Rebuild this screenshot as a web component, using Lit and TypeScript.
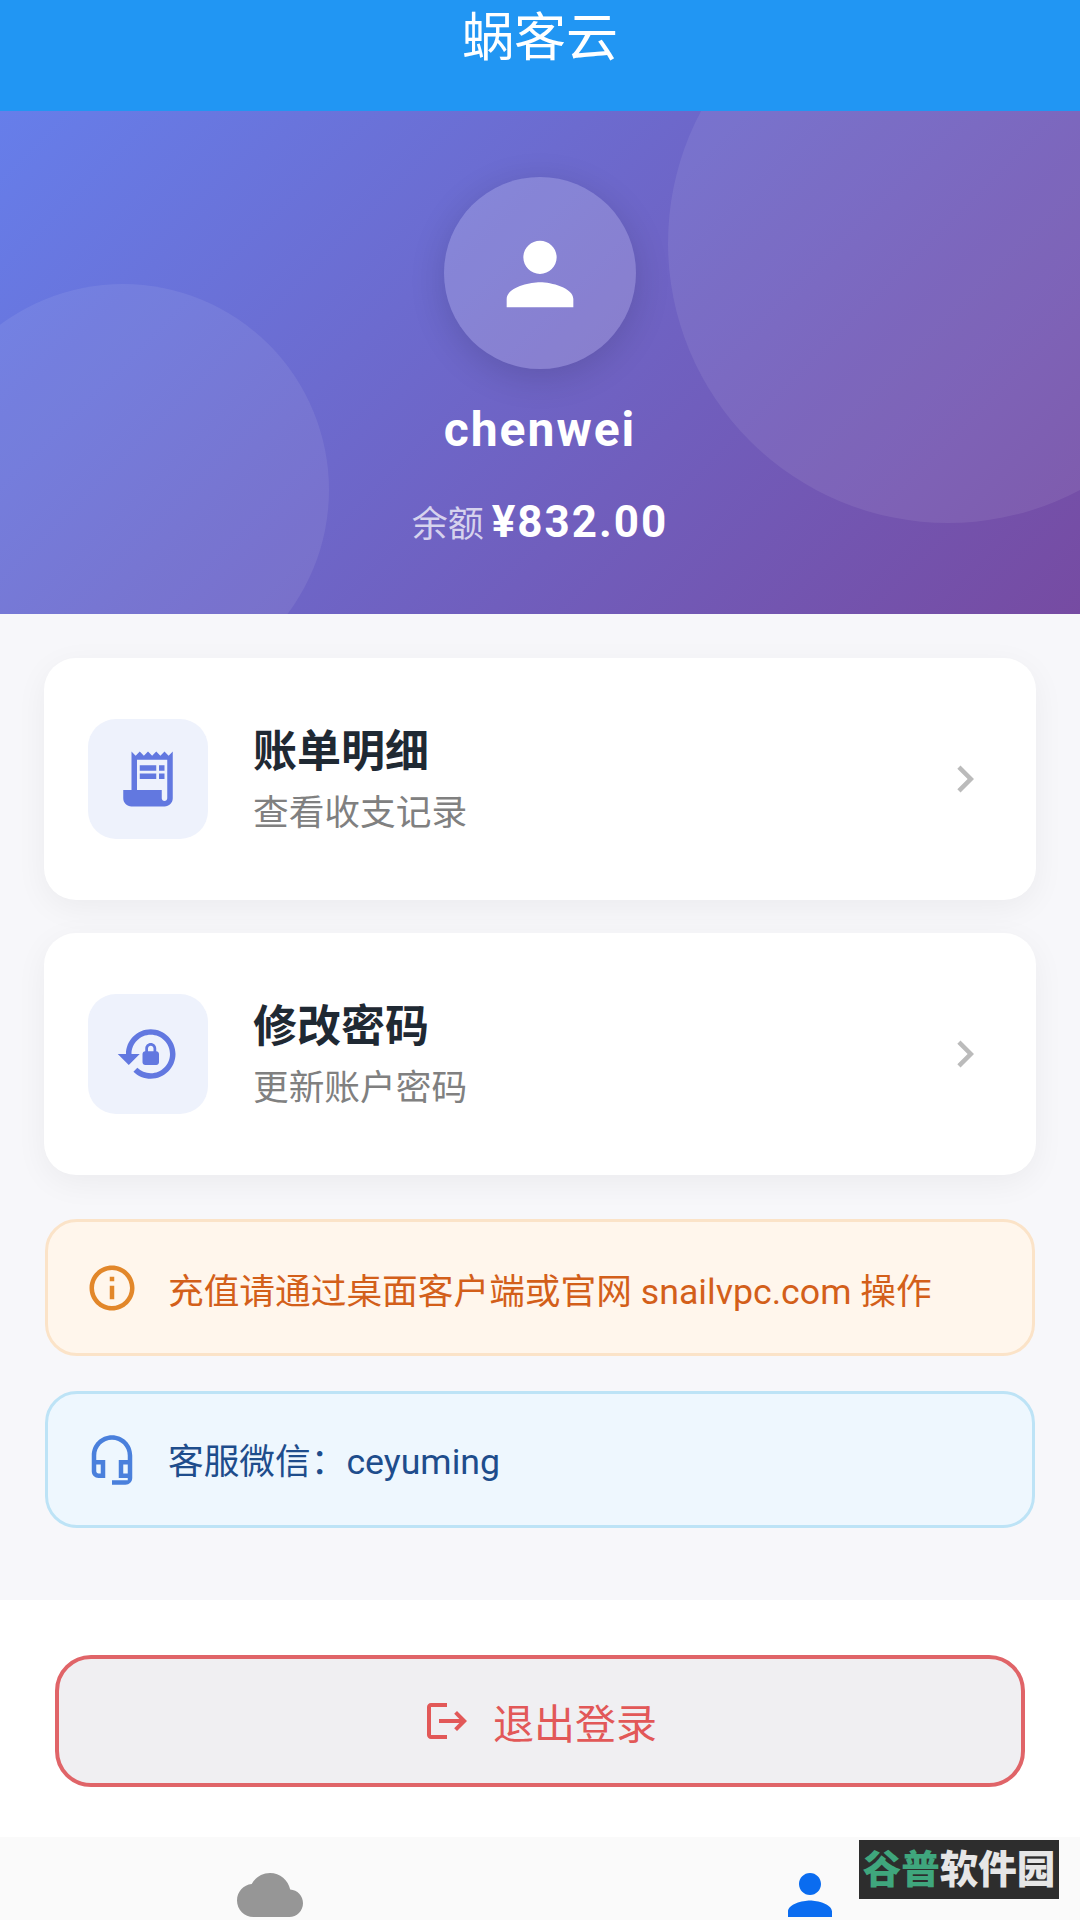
import { LitElement, html, css, svg } from "lit";
import { customElement } from "lit/decorators.js";

const P = {
  person: "M12 12c2.21 0 4-1.79 4-4s-1.79-4-4-4-4 1.79-4 4 1.79 4 4 4zm0 2c-2.67 0-8 1.34-8 4v2h16v-2c0-2.66-5.33-4-8-4z",
  cloud: "M19.35 10.04C18.67 6.59 15.64 4 12 4 9.11 4 6.6 5.64 5.35 8.04 2.34 8.36 0 10.91 0 14c0 3.31 2.69 6 6 6h13c2.76 0 5-2.24 5-5 0-2.64-2.05-4.78-4.65-4.96z",
  receipt: "M19.5 3.5L18 2l-1.5 1.5L15 2l-1.5 1.5L12 2l-1.5 1.5L9 2 7.5 3.5 6 2v14H3v3c0 1.66 1.34 3 3 3h12c1.66 0 3-1.34 3-3V2l-1.5 1.5zM19 19c0 .55-.45 1-1 1s-1-.45-1-1v-3H8V5h11v14zM9 7h6v2H9zM16 7h2v2h-2zM9 10h6v2H9zM16 10h2v2h-2z",
  lock: "M13 3c-4.97 0-9 4.03-9 9H1l4 3.99L9 12H6c0-3.87 3.13-7 7-7s7 3.13 7 7-3.13 7-7 7c-1.9 0-3.62-.76-4.88-1.99L6.7 18.42C8.32 20.01 10.55 21 13 21c4.97 0 9-4.03 9-9s-4.03-9-9-9zm2 8v-1c0-1.1-.9-2-2-2s-2 .9-2 2v1c-.55 0-1 .45-1 1v3c0 .55.45 1 1 1h4c.55 0 1-.45 1-1v-3c0-.55-.45-1-1-1zm-1 0h-2v-1c0-.55.45-1 1-1s1 .45 1 1v1z",
  chevron: "M10 6L8.59 7.41 13.17 12l-4.58 4.59L10 18l6-6z",
  info: "M11 7h2v2h-2zm0 4h2v6h-2zm1-9C6.48 2 2 6.48 2 12s4.48 10 10 10 10-4.48 10-10S17.52 2 12 2zm0 18c-4.41 0-8-3.59-8-8s3.59-8 8-8 8 3.59 8 8-3.59 8-8 8z",
  headset: "M19 14v4h-2v-4h2M7 14v4H6c-.55 0-1-.45-1-1v-3h2m5-13c-4.97 0-9 4.03-9 9v7c0 1.66 1.34 3 3 3h3v-8H5v-2c0-3.87 3.13-7 7-7s7 3.13 7 7v2h-4v8h4v1h-7v2h6c1.66 0 3-1.34 3-3V10c0-4.97-4.03-9-9-9z",
  logout: "M17 7l-1.41 1.41L18.17 11H8v2h10.17l-2.58 2.58L17 17l5-5zM4 5h8V3H4c-1.1 0-2 .9-2 2v14c0 1.1.9 2 2 2h8v-2H4V5z",
};

const icon = (d: string, size: number, color: string) => html`<svg
  class="ic"
  width="${size}"
  height="${size}"
  viewBox="0 0 24 24"
  fill="${color}"
>${svg`<path d="${d}"></path>`}</svg>`;

@customElement("app-root")
export class AppRoot extends LitElement {
  static styles = css`
    :host {
      display: block;
      width: 1080px;
      height: 1920px;
      overflow: hidden;
      position: relative;
      font-family: Roboto, "Noto Sans CJK SC", sans-serif;
      background: #f7f7fa;
    }
    .page { display: flex; flex-direction: column; height: 1920px; }
    .ic { display: block; flex: none; }
    .bar {
      height: 111px;
      flex: none;
      background: #2196f3;
      color: #fff;
      text-align: center;
      font-size: 52px;
      line-height: 78px;
      box-sizing: border-box;
    }
    .hero {
      height: 503px;
      flex: none;
      box-sizing: border-box;
      padding-top: 66px;
      position: relative;
      overflow: hidden;
      background: linear-gradient(135deg, #667eea 0%, #764ba2 100%);
      display: flex;
      flex-direction: column;
      align-items: center;
      color: #fff;
    }
    .blob { position: absolute; border-radius: 50%; background: rgba(255, 255, 255, 0.08); }
    .blob.a { width: 560px; height: 560px; left: 668px; top: -148px; }
    .blob.b { width: 412px; height: 412px; left: -83px; top: 173px; }
    .avatar {
      width: 192px;
      height: 192px;
      box-sizing: border-box;
      padding-top: 2px;
      border-radius: 50%;
      background: rgba(255, 255, 255, 0.18);
      box-shadow: 0 8px 36px rgba(0, 0, 0, 0.14);
      display: flex;
      align-items: center;
      justify-content: center;
      position: relative;
    }
    .name {
      position: relative;
      margin-top: 28px;
      font-size: 48px;
      font-weight: 700;
      line-height: 66px;
      letter-spacing: 2px;
    }
    .balance {
      position: relative;
      margin-top: 29px;
      display: flex;
      align-items: baseline;
      gap: 8px;
      line-height: 60px;
    }
    .balance .lab { font-size: 36px; color: rgba(255, 255, 255, 0.72); }
    .balance .val { font-size: 44px; font-weight: 700; letter-spacing: 2px; }
    .main {
      flex: 1;
      min-height: 0;
      box-sizing: border-box;
      padding: 44px 44px 0;
      display: flex;
      flex-direction: column;
    }
    .card {
      height: 242px;
      flex: none;
      box-sizing: border-box;
      background: #fff;
      border-radius: 32px;
      box-shadow: 0 8px 32px rgba(0, 0, 0, 0.05);
      padding: 0 44px;
      display: flex;
      align-items: center;
      margin-bottom: 33px;
    }
    .tile {
      width: 120px;
      height: 120px;
      border-radius: 28px;
      background: #eef2fc;
      flex: none;
      display: flex;
      align-items: center;
      justify-content: center;
    }
    .txt { flex: 1; margin-left: 45px; padding-top: 1px; }
    .t { font-size: 44px; font-weight: 700; color: #1f2933; line-height: 58px; }
    .s { font-size: 35.7px; color: #808080; line-height: 48px; margin-top: 8px; }
    .note {
      height: 137px;
      flex: none;
      box-sizing: border-box;
      margin-left: 1px;
      width: 990px;
      border-radius: 32px;
      border: 3px solid;
      padding: 0 37px;
      display: flex;
      align-items: center;
      gap: 29px;
      font-size: 35.7px;
    }
    .note.warn {
      margin-top: 11px;
      background: #fff6ec;
      border-color: #fbe3c8;
      color: #d35f1a;
    }
    .note.warn span { margin-top: 2px; }
    .note.help {
      margin-top: 35px;
      background: #eef7fe;
      border-color: #bde3f6;
      color: #1e4d8c;
    }
    .note.help span { margin-bottom: 3px; }
    .foot {
      height: 237px;
      flex: none;
      box-sizing: border-box;
      background: #fff;
      padding: 55px 55px 0;
    }
    .logout {
      height: 132px;
      box-sizing: border-box;
      border: 4px solid #e06468;
      border-radius: 36px;
      background: #f0eff2;
      color: #e25858;
      font-size: 41px;
      display: flex;
      align-items: center;
      justify-content: center;
      gap: 22px;
    }
    .nav {
      height: 83px;
      flex: none;
      box-sizing: border-box;
      background: #fafafa;
      padding-top: 25px;
      display: grid;
      grid-template-columns: 1fr 1fr;
      justify-items: center;
    }
    .mark {
      position: absolute;
      left: 859px;
      top: 1840px;
      width: 200px;
      height: 59px;
      background: #2d2d2d;
      display: flex;
      align-items: center;
      justify-content: center;
      font-size: 38.5px;
      font-weight: 900;
      line-height: 59px;
      white-space: nowrap;
      color: #e6e6e6;
    }
    .mark b { font-weight: 900; color: #3fa67d; }
  `;

  render() {
    return html`
      <div class="page">
        <div class="bar">蜗客云</div>
        <section class="hero">
          <div class="blob a"></div>
          <div class="blob b"></div>
          <div class="avatar">${icon(P.person, 100, "#fff")}</div>
          <div class="name">chenwei</div>
          <div class="balance">
            <span class="lab">余额</span><span class="val">¥832.00</span>
          </div>
        </section>
        <main class="main">
          <div class="card">
            <div class="tile">${icon(P.receipt, 66, "#6278e0")}</div>
            <div class="txt">
              <div class="t">账单明细</div>
              <div class="s">查看收支记录</div>
            </div>
            ${icon(P.chevron, 54, "#bbbbbb")}
          </div>
          <div class="card">
            <div class="tile">${icon(P.lock, 66, "#6278e0")}</div>
            <div class="txt">
              <div class="t">修改密码</div>
              <div class="s">更新账户密码</div>
            </div>
            ${icon(P.chevron, 54, "#bbbbbb")}
          </div>
          <div class="note warn">
            ${icon(P.info, 54, "#e2872a")}
            <span>充值请通过桌面客户端或官网 snailvpc.com 操作</span>
          </div>
          <div class="note help">
            ${icon(P.headset, 54, "#4a80dc")}
            <span>客服微信：ceyuming</span>
          </div>
        </main>
        <div class="foot">
          <div class="logout">
            ${icon(P.logout, 48, "#e25858")}
            <span>退出登录</span>
          </div>
        </div>
        <nav class="nav">
          ${icon(P.cloud, 66, "#969696")} ${icon(P.person, 66, "#0a6cf0")}
        </nav>
      </div>
      <div class="mark"><b>谷普</b>软件园</div>
    `;
  }
}
